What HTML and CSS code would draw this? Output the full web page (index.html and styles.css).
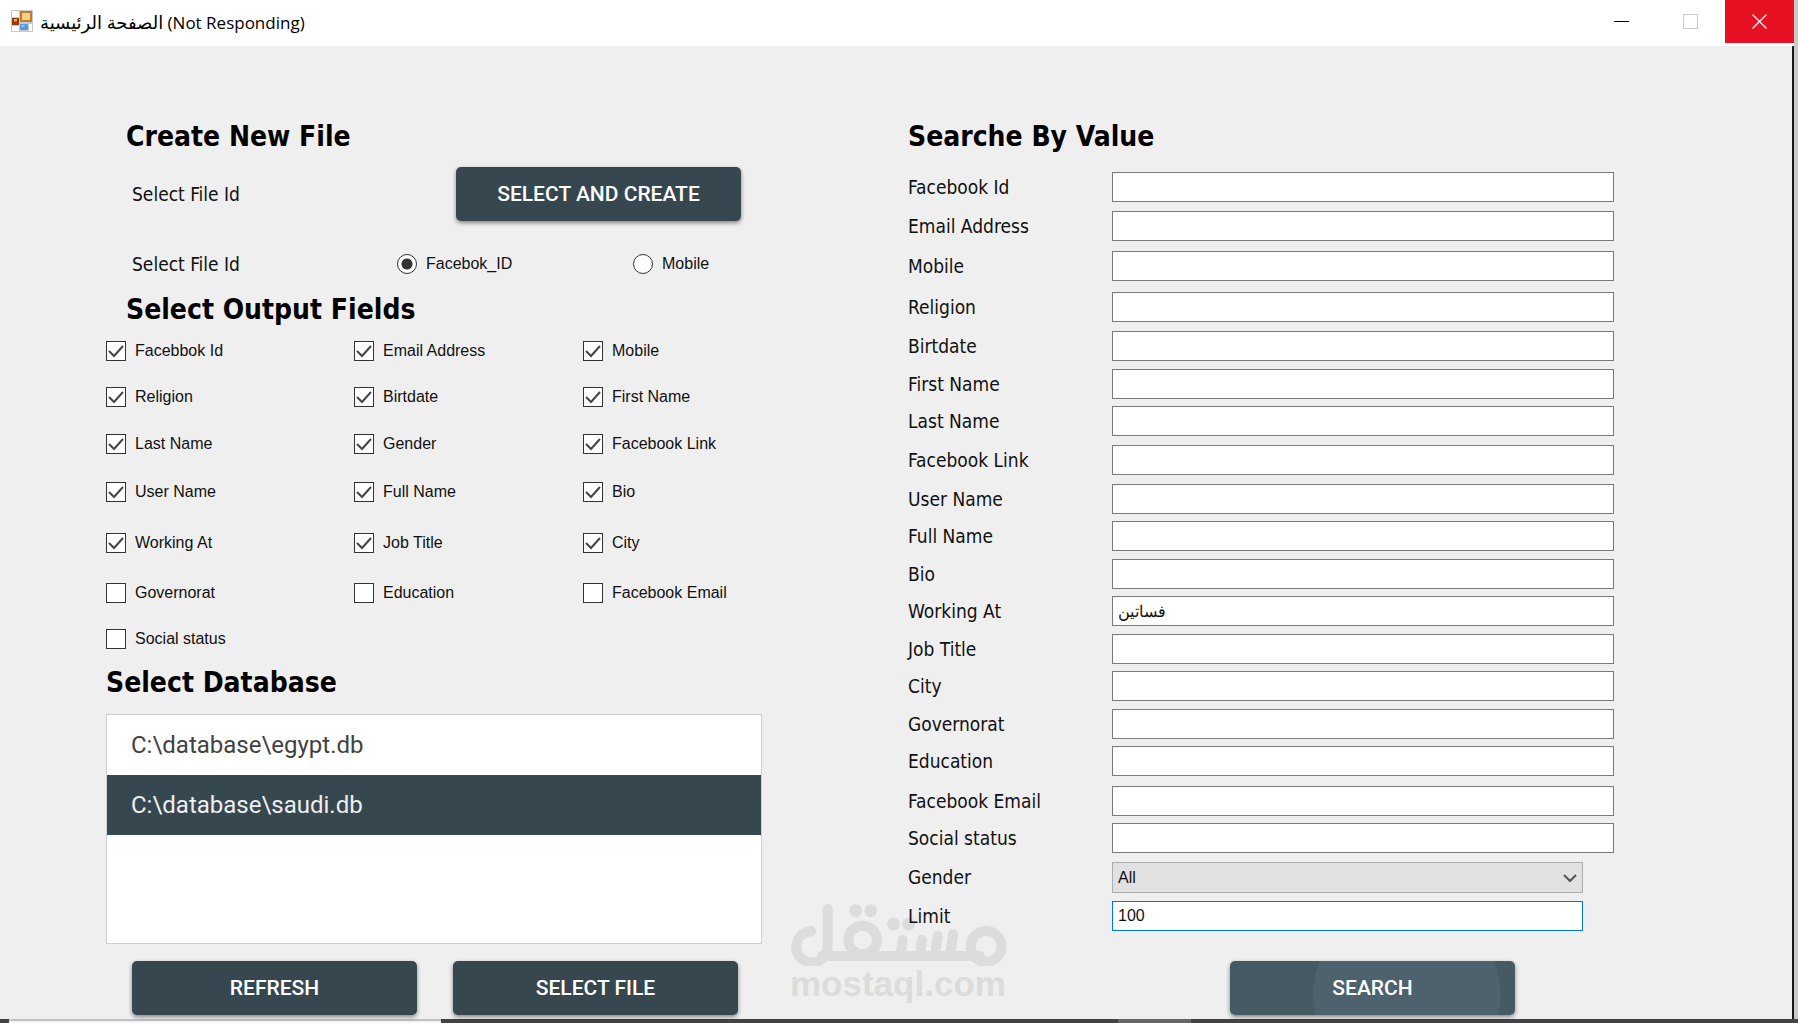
FILE: index.html
```html
<!DOCTYPE html>
<html lang="en">
<head>
<meta charset="utf-8">
<title>الصفحة الرئيسية</title>
<link rel="stylesheet" href="styles.css">
</head>
<body>
<div class="window">
  <header class="titlebar">
    <svg class="app-icon" width="22" height="22" viewBox="0 0 22 22" aria-hidden="true">
      <rect width="22" height="22" fill="#c9c9c9"/>
      <path d="M1 1h7v6H1zM1 16h7v5H1zM18 14h3v7h-3z" fill="#fff"/>
      <rect x="9" y="1" width="12" height="11" fill="#c27b2b"/>
      <rect x="11" y="3" width="8" height="7" fill="#fbcf83"/>
      <rect x="1" y="8" width="7" height="7" fill="#8c3a12"/>
      <rect x="3" y="9" width="3" height="3" fill="#f4b04c"/>
      <rect x="4" y="11" width="3" height="3" fill="#d8231c"/>
      <rect x="9" y="14" width="8" height="6" rx="1" fill="#4c9be0"/>
      <path d="M10 15h5l-4 3z" fill="#8cc6f4"/>
    </svg>
    <h1 class="title"><bdi class="title-name">الصفحة الرئيسية</bdi> (Not Responding)</h1>
    <div class="caption-buttons">
      <button class="caption" type="button" aria-label="Minimize"><svg width="15" height="15" viewBox="0 0 15 15"><path d="M0 7.500h15" stroke="#000"/></svg></button>
      <button class="caption" type="button" aria-label="Maximize"><svg width="15" height="15" viewBox="0 0 15 15"><rect x=".5" y=".5" width="14" height="14" fill="none" stroke="#ccc"/></svg></button>
      <button class="caption caption-close" type="button" aria-label="Close"><svg width="15" height="15" viewBox="0 0 15 15"><path d="M.5 .5l14 14M14.500 .5l-14 14" stroke="#fff" stroke-width="1.200"/></svg></button>
    </div>
  </header>

  <main class="content">
    <section class="left">
      <h2 class="heading indent">Create New File</h2>
      <div class="file-row">
        <span class="label">Select File Id</span>
        <button class="btn" type="button">SELECT AND CREATE</button>
      </div>
      <div class="id-row" role="radiogroup" aria-labelledby="id-kind">
        <span class="label" id="id-kind">Select File Id</span>
        <label class="choice"><input type="radio" name="kind" checked>Facebok_ID</label>
        <label class="choice"><input type="radio" name="kind">Mobile</label>
      </div>
      <h2 class="heading indent output-heading">Select Output Fields</h2>
      <div class="checks">
        <label class="choice"><input type="checkbox" checked>Facebbok Id</label>
        <label class="choice"><input type="checkbox" checked>Email Address</label>
        <label class="choice"><input type="checkbox" checked>Mobile</label>
        <label class="choice"><input type="checkbox" checked>Religion</label>
        <label class="choice"><input type="checkbox" checked>Birtdate</label>
        <label class="choice"><input type="checkbox" checked>First Name</label>
        <label class="choice"><input type="checkbox" checked>Last Name</label>
        <label class="choice"><input type="checkbox" checked>Gender</label>
        <label class="choice"><input type="checkbox" checked>Facebook Link</label>
        <label class="choice"><input type="checkbox" checked>User Name</label>
        <label class="choice"><input type="checkbox" checked>Full Name</label>
        <label class="choice"><input type="checkbox" checked>Bio</label>
        <label class="choice"><input type="checkbox" checked>Working At</label>
        <label class="choice"><input type="checkbox" checked>Job Title</label>
        <label class="choice"><input type="checkbox" checked>City</label>
        <label class="choice"><input type="checkbox">Governorat</label>
        <label class="choice"><input type="checkbox">Education</label>
        <label class="choice"><input type="checkbox">Facebook Email</label>
        <label class="choice"><input type="checkbox">Social status</label>
      </div>
      <h2 class="heading database-heading">Select Database</h2>
      <ul class="databases">
        <li><button class="database" type="button">C:\database\egypt.db</button></li>
        <li><button class="database selected" type="button" aria-pressed="true">C:\database\saudi.db</button></li>
      </ul>
      <div class="actions">
        <button class="btn" type="button">REFRESH</button>
        <button class="btn" type="button">SELECT FILE</button>
      </div>
    </section>

    <section class="right">
      <h2 class="heading">Searche By Value</h2>
      <form class="search">
        <label class="label" for="f1">Facebook Id</label><input class="box" id="f1" type="text">
        <label class="label" for="f2">Email Address</label><input class="box" id="f2" type="text">
        <label class="label" for="f3">Mobile</label><input class="box" id="f3" type="text">
        <label class="label" for="f4">Religion</label><input class="box" id="f4" type="text">
        <label class="label" for="f5">Birtdate</label><input class="box" id="f5" type="text">
        <label class="label" for="f6">First Name</label><input class="box" id="f6" type="text">
        <label class="label" for="f7">Last Name</label><input class="box" id="f7" type="text">
        <label class="label" for="f8">Facebook Link</label><input class="box" id="f8" type="text">
        <label class="label" for="f9">User Name</label><input class="box" id="f9" type="text">
        <label class="label" for="f10">Full Name</label><input class="box" id="f10" type="text">
        <label class="label" for="f11">Bio</label><input class="box" id="f11" type="text">
        <label class="label" for="f12">Working At</label><input class="box" id="f12" type="text" value="فساتين">
        <label class="label" for="f13">Job Title</label><input class="box" id="f13" type="text">
        <label class="label" for="f14">City</label><input class="box" id="f14" type="text">
        <label class="label" for="f15">Governorat</label><input class="box" id="f15" type="text">
        <label class="label" for="f16">Education</label><input class="box" id="f16" type="text">
        <label class="label" for="f17">Facebook Email</label><input class="box" id="f17" type="text">
        <label class="label" for="f18">Social status</label><input class="box" id="f18" type="text">
        <label class="label" for="f19">Gender</label><select class="box short" id="f19"><option>All</option></select>
        <label class="label" for="f20">Limit</label><input class="box short active" id="f20" type="text" value="100">
      </form>
      <button class="btn btn-search" type="button">SEARCH</button>
    </section>

    <div class="watermark">
      <svg width="218" height="66" viewBox="0 0 218 66" role="img" aria-label="مستقل">
        <g fill="none" stroke="#dcdcdc" stroke-width="10" stroke-linecap="round">
          <circle cx="196" cy="46.500" r="15.500"/>
          <circle cx="72.700" cy="40" r="14.300"/>
          <path d="M21 31.200A15.700 15.700 0 1 0 33 58Q37.700 54 37.700 46V9"/>
          <path d="M32 56H190M112.500 40l-2 16M132 40l-2 16M147.500 36l-2.500 20M163 34l-3 22"/>
        </g>
        <g fill="#dcdcdc"><circle cx="65.500" cy="10.700" r="6.500"/><circle cx="80.700" cy="10.700" r="6.500"/><circle cx="103.500" cy="24" r="6.500"/><circle cx="118.700" cy="24" r="6.500"/></g>
      </svg>
      <span class="watermark-text">mostaql.com</span>
    </div>
  </main>
</div>
<footer class="desktop"><span class="desktop-window"></span><span class="desktop-tab"></span></footer>
</body>
</html>
```
FILE: styles.css
```css
* { box-sizing: border-box; }

body {
  margin: 0;
  min-height: 100vh;
  display: flex;
  flex-direction: column;
  background: #cdc8c8;
  color: #111;
  font-family: "Liberation Sans", sans-serif;
}

button, input, select { font: inherit; color: inherit; margin: 0; }

.window {
  flex: 1;
  display: flex;
  flex-direction: column;
  margin-right: 4px;
}

.titlebar {
  display: flex;
  align-items: flex-start;
  height: 46px;
  padding-left: 11px;
  background: #fff;
}

.app-icon { margin-top: 10px; }

.title {
  flex: 1;
  margin: 0 0 0 7px;
  font: 400 17px/44px "Open Sans", "DejaVu Sans", sans-serif;
  color: #000;
}

.title-name { font-size: 18px; }

.caption-buttons { display: flex; }

.caption {
  display: grid;
  place-items: center;
  width: 69px;
  height: 43px;
  padding: 0;
  border: 0;
  background: none;
}

.caption-close { background: #e81123; }

.content {
  flex: 1;
  position: relative;
  z-index: 0;
  display: grid;
  grid-template-columns: 908fr 884fr;
  padding: 73px 0 4px;
  background: #efefef;
  border-right: 2px solid #1a1a1a;
}

.left { padding: 0 146px 0 106px; }
.right { padding-right: 178px; }

.heading {
  margin: 0;
  font: 700 28px/36px "DejaVu Sans Condensed", "DejaVu Sans", sans-serif;
  font-stretch: condensed;
  color: #000;
}

.indent { padding-left: 20px; }

.label {
  font: 400 19px/30px "DejaVu Sans Condensed", "DejaVu Sans", sans-serif;
  font-stretch: condensed;
}

.btn {
  width: 285px;
  height: 54px;
  padding: 0;
  border: 0;
  border-radius: 5px;
  background: #37474f;
  box-shadow: 0 2px 4px rgba(0, 0, 0, .45);
  color: #fff;
  font: 500 21px/54px Roboto, sans-serif;
}

.file-row {
  display: flex;
  align-items: center;
  justify-content: space-between;
  margin-top: 12px;
  padding: 0 21px 0 26px;
}

.id-row {
  display: grid;
  grid-template-columns: 265px 236px 1fr;
  height: 30px;
  margin-top: 28px;
  padding-left: 26px;
}

.choice {
  display: flex;
  align-items: center;
  gap: 9px;
  font-size: 16px;
}

.choice input {
  appearance: none;
  width: 20px;
  height: 20px;
  border: 1px solid #333;
  background: #fff center / 18px 18px no-repeat;
}

.choice input[type="radio"] { border-radius: 50%; }
.choice input[type="radio"]:checked { background-image: radial-gradient(circle, #333 5px, transparent 6px); }
.choice input[type="checkbox"]:checked {
  background-image: url("data:image/svg+xml,%3Csvg xmlns='http://www.w3.org/2000/svg' viewBox='0 0 18 18'%3E%3Cpath d='M2 9l5 5 9-10' fill='none' stroke='%23444' stroke-width='2'/%3E%3C/svg%3E");
}

.output-heading { margin-top: 13px; }

.checks {
  display: grid;
  grid-template-columns: 248px 229px 1fr;
  grid-template-rows: 46px 46px 48px 48px 54px 46px 46px;
}

.database-heading { margin-top: 3px; }

.databases {
  height: 230px;
  margin: 13px 0 0;
  padding: 0;
  border: 1px solid #d0d0d0;
  background: #fff;
  list-style: none;
}

.database {
  display: block;
  width: 100%;
  height: 60px;
  padding: 0 24px;
  border: 0;
  background: none;
  color: #424242;
  font: 400 24px/60px Roboto, sans-serif;
  text-align: left;
}

.database.selected { background: #37474f; color: #eee; }

.actions {
  display: flex;
  gap: 36px;
  margin-top: 17px;
  padding-left: 26px;
}

.search {
  display: grid;
  grid-template-columns: 204px 1fr;
  grid-template-rows: 39px 40px 41px 39px 38px 37px 39px 39px 37px 38px 37px 38px 37px 38px 37px 40px 37px 39px 39px 30px;
  margin-top: 17px;
}

.box {
  width: 100%;
  height: 30px;
  padding: 0 5px;
  border: 1px solid #7a7a7a;
  border-radius: 0;
  background: #fff;
  font-size: 16px;
}

.short { width: calc(100% - 31px); }
.active { border-color: #0078d7; }

select.box {
  appearance: none;
  height: 31px;
  border-color: #adadad;
  background: #e1e1e1 url("data:image/svg+xml,%3Csvg xmlns='http://www.w3.org/2000/svg' viewBox='0 0 14 10'%3E%3Cpath d='M1 2l6 6 6-6' fill='none' stroke='%23555' stroke-width='2'/%3E%3C/svg%3E") right 5px center / 14px 10px no-repeat;
}

.btn-search {
  display: block;
  margin: 30px auto 0 322px;
  background: radial-gradient(circle at 177px 34px, #4d626c 93px, #455a62 94px);
}

.watermark {
  position: absolute;
  z-index: -1;
  left: 790px;
  bottom: 17px;
  display: flex;
  flex-direction: column;
  pointer-events: none;
}

.watermark-text {
  color: #dcdcdc;
  font: 700 35px/36px "Liberation Sans", sans-serif;
}

.desktop {
  display: grid;
  grid-template-columns: 9px 432px 677px 73px;
  height: 4px;
  background: #434343;
}

.desktop-window { grid-column: 2; background: #f5f5f5; border-top: 2px solid #c0c0c0; }
.desktop-tab { grid-column: 4; background: #666; }
```
